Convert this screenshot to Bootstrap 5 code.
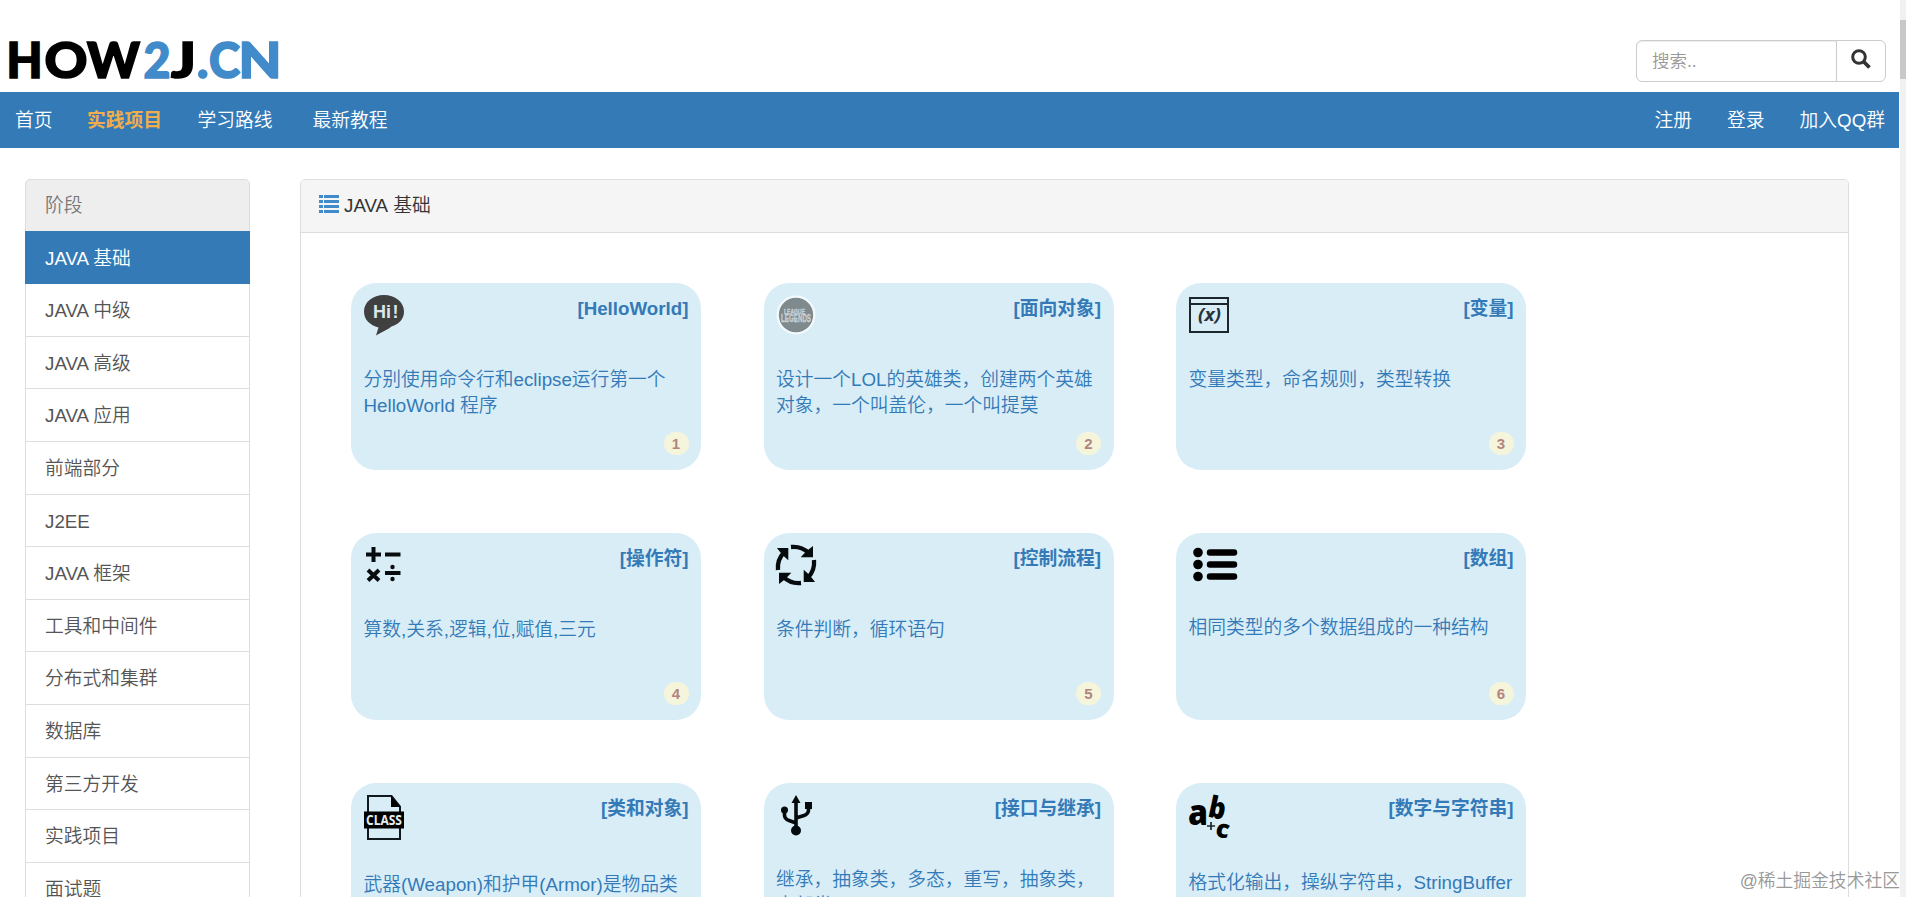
<!DOCTYPE html>
<html lang="zh-CN">
<head>
<meta charset="utf-8">
<meta name="viewport" content="width=device-width, initial-scale=1">
<title>HOW2J.CN</title>
<link href="https://cdn.jsdelivr.net/npm/bootstrap@5.3.0/dist/css/bootstrap.min.css" rel="stylesheet">
<style>
html,body{height:100%;overflow:hidden}
body{font-family:"Liberation Sans","Noto Sans CJK SC",sans-serif;font-size:18.75px;font-weight:350;line-height:26px;color:#333;background:#fff}
.page-wrap{height:897px;overflow:hidden}
.page-main{width:1899px}
.site-top{height:92px;padding:40px 13px 0 8px}
.search-box{width:250px;height:42px}
.search-box .form-control,.search-box .btn{border-color:#ccc;font-size:17.5px;font-weight:350}
.search-box .form-control{padding:0 15px;box-shadow:inset 0 1px 1px rgba(0,0,0,.075)}
.search-box .form-control::placeholder{color:#999}
.search-box .btn{width:50px;padding:0;background:#fff}
.site-nav{height:56px;background:#337ab7;padding:2px 14px 0 15px}
.site-nav .nav-link{color:#fff;padding:0;white-space:nowrap}
.site-nav .nav-link.hot{color:#f0ad4e;font-weight:700}
.content-row{padding:31px 0 0 25px;gap:50px}
.stage-list{width:225px;--bs-list-group-border-color:#ddd;--bs-list-group-border-radius:5px}
.stage-list .list-group-item{height:52.6px;padding:0 19px;line-height:53px;color:#555}
.stage-list .head-item{background:#eee;color:#777;line-height:52px}
.stage-list .list-group-item.active{background:#337ab7;border-color:#337ab7;color:#fff;height:53.6px}
.panel-box{width:1549px;height:1000px;border:1px solid #ddd;border-radius:5px}
.panel-head{height:53px;background:#f5f5f5;border-bottom:1px solid #ddd;padding:0 18px;border-radius:4px 4px 0 0}
.panel-grid{display:grid;grid-template-columns:repeat(3,350px);grid-auto-rows:187px;gap:63px 62.5px;padding:50px}
.step-card{background:#d9edf7;border-radius:25px;padding:12px 12.5px;color:#337ab7;height:187px}
.step-top{height:41px}
.step-title{font-weight:700;line-height:28px}
.step-text{margin:31px 0 0;white-space:nowrap}
.step-num{right:12.5px;bottom:15px;width:25px;height:23px;line-height:23px;border-radius:12px;background:#f5f5dc;color:#b38480;font-size:15px;font-weight:700;text-align:center}
svg{display:block;flex:none;overflow:visible}
.scroll-rail{width:6px;background:#f1f1f1;top:0;right:0;height:897px}
.scroll-rail i{display:block;height:59px;margin-top:20px;background:#c8c8c8}
.water-tag{right:6px;bottom:3px;font-size:17.8px;color:#999}
</style>
</head>
<body>
<div class="page-wrap position-relative">
<div class="page-main">
<header class="site-top d-flex justify-content-between">
  <svg width="275" height="44" font-family="Lato" font-weight="900" font-size="48.5" stroke-width="1.6">
    <g fill="#000" stroke="#000"><text x="-1.500" y="38" textLength="36" lengthAdjust="spacingAndGlyphs">H</text><text x="36.500" y="38" textLength="43" lengthAdjust="spacingAndGlyphs">O</text><text x="79" y="38" textLength="53" lengthAdjust="spacingAndGlyphs">W</text><text x="163" y="38" textLength="25" lengthAdjust="spacingAndGlyphs">J</text></g>
    <g fill="#428bca" stroke="#428bca"><text x="135.500" y="38" textLength="27" lengthAdjust="spacingAndGlyphs">2</text><text x="189" y="38">.</text><text x="201" y="38" textLength="31" lengthAdjust="spacingAndGlyphs">C</text><text x="230.500" y="38" textLength="43" lengthAdjust="spacingAndGlyphs">N</text></g>
  </svg>
  <form class="input-group search-box">
    <input class="form-control" type="text" placeholder="搜索..">
    <button class="btn d-flex align-items-center justify-content-center pb-1" type="button" aria-label="搜索"><svg width="20" height="20" fill="none" stroke="#333" stroke-width="3"><circle cx="8" cy="8" r="6.3"/><path d="M12.5 12.5l6 6" stroke-width="3.8"/></svg></button>
  </form>
</header>
<nav class="site-nav d-flex align-items-center justify-content-between">
  <div class="d-flex">
    <a class="nav-link" style="margin-right:34.5px">首页</a><a class="nav-link hot" style="margin-right:35.5px">实践项目</a><a class="nav-link" style="margin-right:40px">学习路线</a><a class="nav-link">最新教程</a>
  </div>
  <div class="d-flex" style="gap:35px"><a class="nav-link">注册</a><a class="nav-link">登录</a><a class="nav-link">加入QQ群</a></div>
</nav>
<main class="content-row d-flex align-items-start">
  <div class="list-group stage-list">
    <div class="list-group-item head-item">阶段</div>
    <a class="list-group-item active">JAVA 基础</a>
    <a class="list-group-item">JAVA 中级</a>
    <a class="list-group-item">JAVA 高级</a>
    <a class="list-group-item">JAVA 应用</a>
    <a class="list-group-item">前端部分</a>
    <a class="list-group-item">J2EE</a>
    <a class="list-group-item">JAVA 框架</a>
    <a class="list-group-item">工具和中间件</a>
    <a class="list-group-item">分布式和集群</a>
    <a class="list-group-item">数据库</a>
    <a class="list-group-item">第三方开发</a>
    <a class="list-group-item">实践项目</a>
    <a class="list-group-item">面试题</a>
  </div>
  <section class="panel-box">
    <div class="panel-head d-flex align-items-center">
      <svg class="mb-1" width="20" height="18" fill="#428bca"><path d="M0 0h4v3H0zM0 5h4v3H0zM0 10h4v3H0zM0 15h4v3H0zM5 0h15v3H5zM5 5h15v3H5zM5 10h15v3H5zM5 15h15v3H5z"/></svg>
      <span style="margin-left:5px;word-spacing:1px">JAVA 基础</span>
    </div>
    <div class="panel-grid">
      <article class="step-card position-relative">
        <div class="step-top d-flex justify-content-between">
          <svg width="42" height="41"><path d="M20 0C9 0 0 7 0 16.500 0 25 6 30 14.500 32.500L12 40.500C18 37 24 34.500 27.500 31.500 35 29 40 24 40 16.500 40 7 31 0 20 0z" fill="#404040"/><g font-size="18" font-weight="700" fill="#dbe6ea"><text x="9" y="23" textLength="18" lengthAdjust="spacingAndGlyphs">Hi</text><text x="28.500" y="23">!</text></g></svg>
          <div class="step-title">[HelloWorld]</div></div>
        <p class="step-text">分别使用命令行和eclipse运行第一个<br>HelloWorld 程序</p><span class="step-num position-absolute">1</span>
      </article>
      <article class="step-card position-relative">
        <div class="step-top d-flex justify-content-between">
          <svg width="42" height="41"><circle cx="20" cy="20" r="18.300" fill="#7f8a8e" stroke="#f5fafc" stroke-width="2.200"/><g fill="#c5ced2" font-weight="700" stroke="#c5ced2" stroke-width=".4"><text x="8" y="19" font-size="7" textLength="21" lengthAdjust="spacingAndGlyphs">LEAGUE</text><text x="5" y="26.500" font-size="10" textLength="30" lengthAdjust="spacingAndGlyphs">LEGENDS</text></g></svg>
          <div class="step-title">[面向对象]</div></div>
        <p class="step-text">设计一个LOL的英雄类，创建两个英雄<br>对象，一个叫盖伦，一个叫提莫</p><span class="step-num position-absolute">2</span>
      </article>
      <article class="step-card position-relative">
        <div class="step-top d-flex justify-content-between">
          <svg width="42" height="41" fill="none" stroke="#1b272d" stroke-width="2"><path d="M1 3h38v34H1zM1 9h38"/><text x="9" y="26" fill="#26343b" stroke="none" font-family="Open Sans" font-size="17" font-style="italic" font-weight="700" textLength="23" lengthAdjust="spacingAndGlyphs">(x)</text></svg>
          <div class="step-title">[变量]</div></div>
        <p class="step-text">变量类型，命名规则，类型转换</p><span class="step-num position-absolute">3</span>
      </article>
      <article class="step-card position-relative">
        <div class="step-top d-flex justify-content-between">
          <svg width="42" height="41" fill="none" stroke="#080d0f" stroke-width="4"><path d="M2 9.500h15M9.500 2v15M21 9.500h15.500M21 28h15.500M4 25l11 10.500M15 25L4 35.500"/><g fill="#080d0f" stroke="none"><circle cx="28.500" cy="22" r="2.200"/><circle cx="28.500" cy="34" r="2.200"/></g></svg>
          <div class="step-title">[操作符]</div></div>
        <p class="step-text">算数,关系,逻辑,位,赋值,三元</p><span class="step-num position-absolute">4</span>
      </article>
      <article class="step-card position-relative">
        <div class="step-top d-flex justify-content-between">
          <svg width="42" height="41"><defs><g id="cycleArm"><path d="M15 2Q25.500 1 32.500 8" fill="none" stroke="#060b0d" stroke-width="4.300"/><path d="M36 3v8.300H27L31 7z" fill="#060b0d" stroke="#060b0d" stroke-width="2"/></g></defs><use href="#cycleArm"/><use href="#cycleArm" transform="rotate(90 20 20)"/><use href="#cycleArm" transform="rotate(180 20 20)"/><use href="#cycleArm" transform="rotate(270 20 20)"/></svg>
          <div class="step-title">[控制流程]</div></div>
        <p class="step-text">条件判断，循环语句</p><span class="step-num position-absolute">5</span>
      </article>
      <article class="step-card position-relative">
        <div class="step-top d-flex justify-content-between">
          <svg width="50" height="41"><g fill="#000"><circle cx="9" cy="7.500" r="4.800"/><circle cx="9" cy="19.500" r="4.800"/><circle cx="9" cy="31.500" r="4.800"/></g><path d="M21 7.500h24M21 19.500h24M21 31.500h24" stroke="#000" stroke-width="6.500" stroke-linecap="round"/></svg>
          <div class="step-title">[数组]</div></div>
        <p class="step-text" style="margin-top:29px">相同类型的多个数据组成的一种结构</p><span class="step-num position-absolute">6</span>
      </article>
      <article class="step-card position-relative">
        <div class="step-top d-flex justify-content-between">
          <svg width="42" height="46"><path d="M4 1h23.500L36 11.500V44H4z" fill="none" stroke="#10191d" stroke-width="2"/><path d="M27 1v11h9.500z"/><path d="M0 16.500h40v17H0z"/><text x="2" y="30" font-size="14" font-weight="700" font-family="Open Sans" fill="#e5eff3" textLength="36" lengthAdjust="spacingAndGlyphs">CLASS</text></svg>
          <div class="step-title">[类和对象]</div></div>
        <p class="step-text" style="margin-top:36px">武器(Weapon)和护甲(Armor)是物品类</p><span class="step-num position-absolute">7</span>
      </article>
      <article class="step-card position-relative">
        <div class="step-top d-flex justify-content-between">
          <svg width="42" height="41" fill="none" stroke="#050a0c" stroke-width="3.600"><path d="M20 6v29M8.500 15v5Q8.500 24 13 25.500L20 28M32.500 10v5Q32.500 19 28 20.500L20 23"/><g fill="#050a0c" stroke="none"><path d="M20 0l4.500 8h-9zM29 7h7v7h-7z"/><circle cx="8.500" cy="15" r="3.500"/><circle cx="20" cy="35.500" r="5"/></g></svg>
          <div class="step-title">[接口与继承]</div></div>
        <p class="step-text">继承，抽象类，多态，重写，抽象类，<br>内部类</p><span class="step-num position-absolute">8</span>
      </article>
      <article class="step-card position-relative">
        <div class="step-top d-flex justify-content-between">
          <svg width="44" height="45" font-family="Open Sans" font-weight="800" fill="#000"><text x="-1" y="29.500" font-size="36" textLength="20" lengthAdjust="spacingAndGlyphs">a</text><text transform="translate(18 21.500) rotate(12)" font-size="30" font-weight="800" textLength="17" lengthAdjust="spacingAndGlyphs">b</text><text transform="translate(25.500 41) rotate(12)" font-size="25" font-weight="800">c</text><path d="M18 31h8M22 27v8" stroke="#1b272d" stroke-width="1.700"/></svg>
          <div class="step-title">[数字与字符串]</div></div>
        <p class="step-text" style="margin-top:34px">格式化输出，操纵字符串，StringBuffer</p><span class="step-num position-absolute">9</span>
      </article>
    </div>
  </section>
</main>
</div>
<div class="water-tag position-absolute">@稀土掘金技术社区</div>
<div class="scroll-rail position-absolute d-flex flex-column"><i></i></div>
</div>
<script src="https://cdn.jsdelivr.net/npm/bootstrap@5.3.0/dist/js/bootstrap.bundle.min.js"></script>
</body>
</html>
